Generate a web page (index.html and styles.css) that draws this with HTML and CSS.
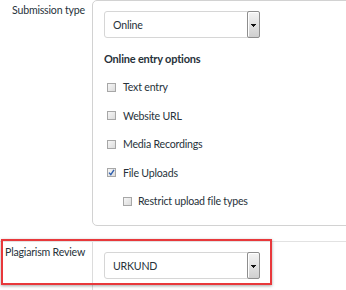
FILE: index.html
```html
<!DOCTYPE html>
<html>
<head>
<meta charset="utf-8">
<link rel="stylesheet" href="styles.css">
</head>
<body>
<div class="page">
  <div class="row row-submission">
    <div class="label label-first">Submission type</div>
    <div class="panel">
      <div class="select">
        <span class="select-value">Online</span>
        <span class="select-btn">
          <svg width="5" height="3" viewBox="0 0 5 3" shape-rendering="crispEdges"><rect x="0" y="0" width="5" height="1" fill="#111"/><rect x="1" y="1" width="3" height="1" fill="#111"/><rect x="2" y="2" width="1" height="1" fill="#111"/></svg>
        </span>
      </div>
      <div class="options-title">Online entry options</div>
      <ul class="options">
        <li class="option"><span class="checkbox"></span>Text entry</li>
        <li class="option"><span class="checkbox"></span>Website URL</li>
        <li class="option"><span class="checkbox"></span>Media Recordings</li>
        <li class="option"><span class="checkbox checked"><svg width="9" height="9" viewBox="0 0 9 9"><path d="M2 4.6 L3.8 6.6 L7 1.8" fill="none" stroke="#2f5fae" stroke-width="1.4"/></svg></span>File Uploads</li>
        <li class="option sub"><span class="checkbox"></span>Restrict upload file types</li>
      </ul>
    </div>
  </div>
  <div class="row row-plagiarism">
    <div class="label label-second">Plagiarism Review</div>
    <div class="cell">
      <div class="select">
        <span class="select-value">URKUND</span>
        <span class="select-btn">
          <svg width="5" height="3" viewBox="0 0 5 3" shape-rendering="crispEdges"><rect x="0" y="0" width="5" height="1" fill="#111"/><rect x="1" y="1" width="3" height="1" fill="#111"/><rect x="2" y="2" width="1" height="1" fill="#111"/></svg>
        </span>
      </div>
    </div>
    <div class="highlight"></div>
  </div>
</div>
</body>
</html>
```

FILE: styles.css
```css
html, body {
  margin: 0;
  padding: 0;
  background: #ffffff;
}

.page {
  width: 346px;
  height: 290px;
  overflow: hidden;
  font-family: Lato, "Open Sans", sans-serif;
  font-size: 10.6px;
  letter-spacing: -0.2px;
  color: #27323a;
}

.row {
  display: flex;
}

.row-submission {
  height: 226px;
}

.label {
  width: 92px;
  flex-shrink: 0;
  box-sizing: border-box;
  white-space: nowrap;
  line-height: 13px;
}

.label-first {
  padding: 4px 0 0 12px;
}

.panel {
  flex-shrink: 0;
  width: 300px;
  box-sizing: border-box;
  border: 1px solid #d2d2d2;
  border-radius: 5px;
  padding: 10px 0 0 11px;
}

.select {
  display: flex;
  width: 156px;
  height: 27px;
  box-sizing: border-box;
  border: 1px solid #d6d6d6;
  border-radius: 3px;
  background: #fff;
  align-items: stretch;
}

.select-value {
  flex: 1;
  display: flex;
  align-items: center;
  padding-left: 8px;
}

.select-btn {
  width: 13px;
  box-sizing: border-box;
  margin: -1px -1px -1px 0;
  border: 1px solid #8e8e8e;
  border-radius: 2px;
  background: linear-gradient(to bottom, #f4f4f4 0%, #e2e2e2 50%, #cfcfcf 100%);
  box-shadow: inset 1px 1px 0 #ffffff;
  display: flex;
  align-items: center;
  justify-content: center;
}

.select-btn svg {
  display: block;
  margin-top: 1px;
}

.options-title {
  margin-top: 14px;
  font-weight: 700;
  font-size: 11px;
  line-height: 13px;
}

.options {
  list-style: none;
  margin: 8px 0 0;
  padding: 0;
}

.option {
  display: flex;
  align-items: center;
  height: 28.5px;
  padding-left: 3px;
  white-space: nowrap;
}

.option.sub {
  padding-left: 19px;
}

.checkbox {
  width: 9px;
  height: 9px;
  box-sizing: border-box;
  border: 1px solid #a7a7a7;
  background: linear-gradient(to bottom right, #f6f6f6, #dcdcdc);
  margin-right: 7px;
  flex-shrink: 0;
  position: relative;
}

.option.sub .checkbox {
  margin-right: 6px;
}

.checkbox.checked svg {
  position: absolute;
  left: -1px;
  top: -1px;
}

.row-plagiarism {
  position: relative;
  margin-top: 15px;
  border-top: 1px solid #e2e2e2;
  height: 60px;
}

.label-second {
  padding: 4px 0 0 5px;
  border-right: 1px solid #dcdcdc;
  width: 93px;
}

.cell {
  padding: 10px 0 0 11px;
}

.highlight {
  position: absolute;
  left: 1px;
  top: -3px;
  width: 271px;
  height: 46px;
  box-sizing: border-box;
  border: 2px solid #e8383b;
  box-shadow: 0 1px 3px rgba(0, 0, 0, 0.35);
}
```
